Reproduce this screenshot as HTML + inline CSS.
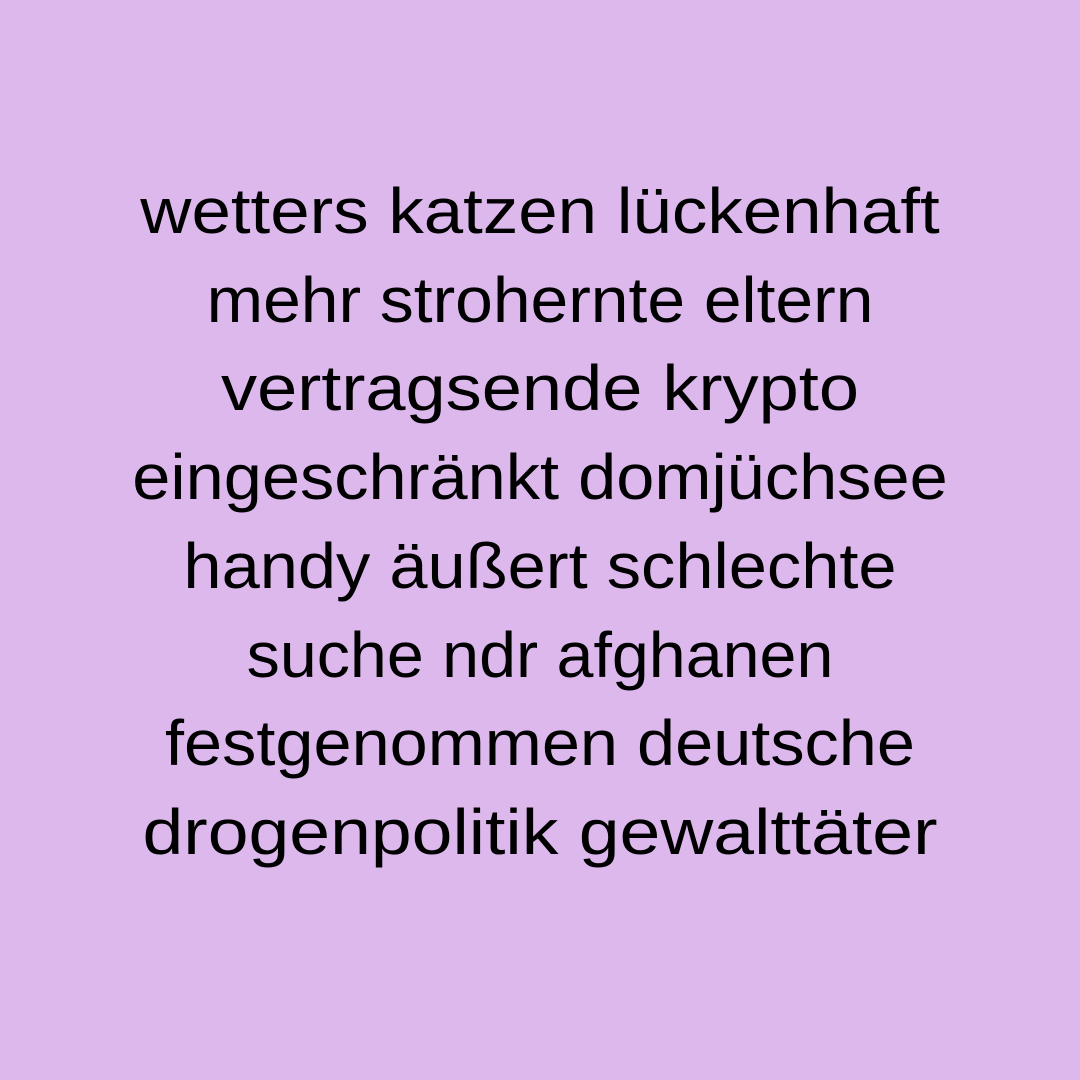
<!DOCTYPE html>
<html><head><meta charset="utf-8"><style>
html,body{margin:0;padding:0}
body{width:1080px;height:1080px;background:#ddb8ec;overflow:hidden;position:relative}
.t{position:absolute;top:167px;left:0;width:1080px;text-align:center;font-family:"Liberation Sans",sans-serif;font-size:64px;line-height:88.7px;color:#000}
.t div{display:block;transform-origin:540px 0}
</style></head><body>
<div class="t">
<div style="transform:scaleX(1.107)">wetters katzen lückenhaft</div>
<div style="transform:scaleX(1.059)">mehr strohernte eltern</div>
<div style="transform:scaleX(1.128)">vertragsende krypto</div>
<div style="transform:scaleX(1.071)">eingeschränkt domjüchsee</div>
<div style="transform:scaleX(1.072)">handy äußert schlechte</div>
<div style="transform:scaleX(1.037)">suche ndr afghanen</div>
<div style="transform:scaleX(1.07)">festgenommen deutsche</div>
<div style="transform:scaleX(1.146)">drogenpolitik gewalttäter</div>
</div>
</body></html>
